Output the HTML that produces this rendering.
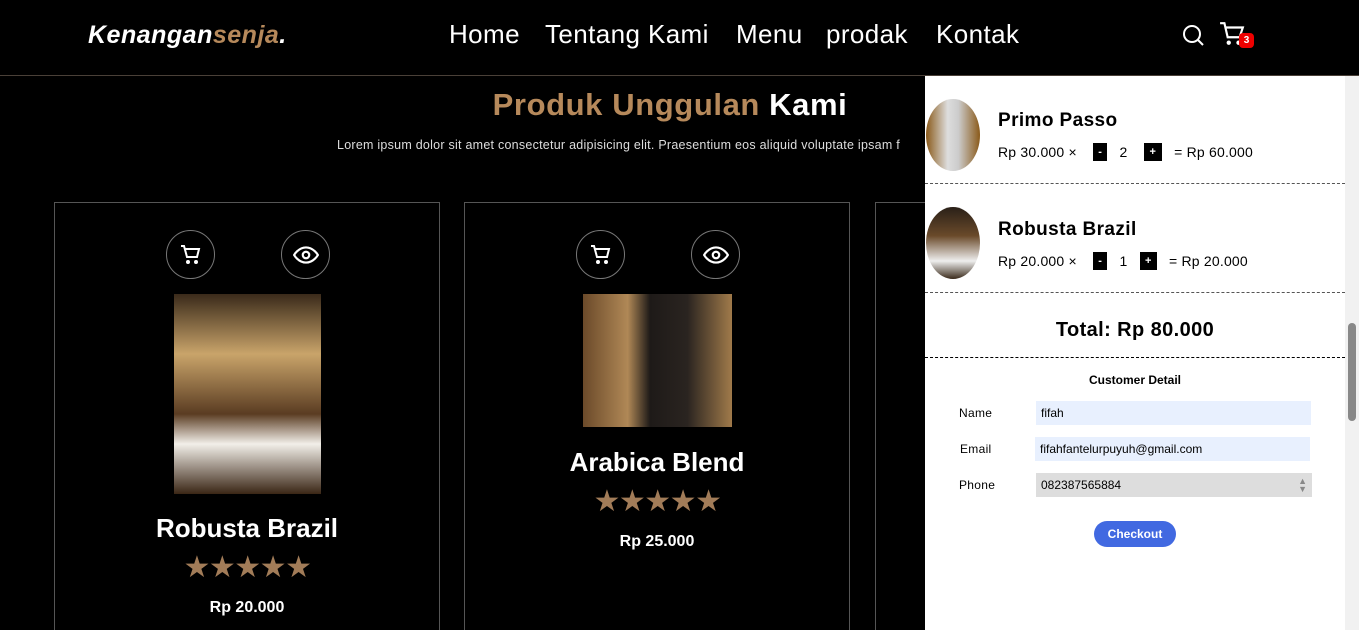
<!DOCTYPE html>
<html><head><meta charset="utf-8"><style>
*{margin:0;padding:0;box-sizing:border-box}
html,body{width:1359px;height:630px;overflow:hidden}
body{background:#000;font-family:"Liberation Sans",sans-serif;color:#fff;position:relative}
.hdr{position:absolute;left:0;top:0;width:1359px;height:76px;border-bottom:1px solid #4a4038}
.logo{position:absolute;left:88px;top:21px;font-size:25px;font-weight:bold;font-style:italic;letter-spacing:0.5px}
.logo span{color:#b6895b}
.nav{position:absolute;top:19px;font-size:26px;letter-spacing:0.4px}
.ttl{position:absolute;top:87px;left:0;width:1340px;text-align:center;font-size:31px;font-weight:bold;letter-spacing:0.6px}
.ttl span{color:#b6895b}
.sub{position:absolute;top:138px;left:337px;font-size:12.5px;color:#ddd;white-space:nowrap;letter-spacing:0.25px}
.card{position:absolute;top:202px;width:386px;height:440px;border:1px solid #555}
.ic{position:absolute;top:27px;width:49px;height:49px;border:1px solid #777;border-radius:50%;display:flex;align-items:center;justify-content:center}
.img{position:absolute}
.pn{position:absolute;width:100%;text-align:center;font-size:26px;font-weight:bold;letter-spacing:0}
.st{position:absolute;width:100%;text-align:center;color:#a27c58;font-size:30px;letter-spacing:-1.5px}
.pr{position:absolute;width:100%;text-align:center;font-size:16px;font-weight:bold}
.side{position:absolute;left:925px;top:76px;width:420px;height:554px;background:#fff;color:#000}
.sb{position:absolute;left:1345px;top:76px;width:14px;height:554px;background:#f1f1f1}
.sb div{position:absolute;left:3px;top:247px;width:8px;height:98px;background:#888;border-radius:4px}
.item{position:absolute;left:0;width:420px;border-bottom:1px dashed #555}
.av{position:absolute;left:1px;width:54px;border-radius:50%}
.nm{position:absolute;left:73px;font-size:19px;font-weight:bold;letter-spacing:0.4px}
.ln{position:absolute;left:73px;font-size:14px;display:flex;align-items:center;white-space:nowrap;letter-spacing:0.2px}
.bt{display:inline-block;width:14px;height:18px;background:#000;color:#fff;font-size:11px;text-align:center;line-height:18px;font-weight:bold}
.lbl{position:absolute;font-size:12px;letter-spacing:0.3px}
.inp{position:absolute;left:111px;width:275px;height:24px;background:#e8f0fe;font-size:12px;padding:3px 5px;line-height:18px}
</style></head><body>
<div class="hdr">
<div class="logo">Kenangan<span>senja</span>.</div>
<div class="nav" style="left:449px">Home</div>
<div class="nav" style="left:545px">Tentang Kami</div>
<div class="nav" style="left:736px">Menu</div>
<div class="nav" style="left:826px">prodak</div>
<div class="nav" style="left:936px">Kontak</div>
<svg style="position:absolute;left:1181px;top:23px" width="24" height="24" viewBox="0 0 24 24" fill="none" stroke="#fff" stroke-width="2"><circle cx="11" cy="11" r="8"/><path d="M17 17l5 5"/></svg>
<svg style="position:absolute;left:1219px;top:21px" width="26" height="26" viewBox="0 0 24 24" fill="none" stroke="#fff" stroke-width="2"><path d="M1 2h4l3 13h11l3-9H6"/><circle cx="9" cy="20" r="1" fill="#fff"/><circle cx="18" cy="20" r="1" fill="#fff"/></svg>
<div style="position:absolute;left:1239px;top:33px;width:15px;height:15px;background:#e00;border-radius:4px;font-size:10px;font-weight:bold;text-align:center;line-height:15px">3</div>
</div>
<div class="ttl"><span>Produk Unggulan</span> Kami</div>
<div class="sub">Lorem ipsum dolor sit amet consectetur adipisicing elit. Praesentium eos aliquid voluptate ipsam f</div>

<div class="card" style="left:54px">
<div class="ic" style="left:111px"><svg width="24" height="24" viewBox="0 0 24 24" fill="none" stroke="#fff" stroke-width="2"><path d="M2 3h3l3 11h10l2-8H6"/><circle cx="9" cy="19" r="1" fill="#fff"/><circle cx="17" cy="19" r="1" fill="#fff"/></svg></div>
<div class="ic" style="left:226px"><svg width="26" height="26" viewBox="0 0 24 24" fill="none" stroke="#fff" stroke-width="2"><path d="M1 12s4-7 11-7 11 7 11 7-4 7-11 7S1 12 1 12z"/><circle cx="12" cy="12" r="3"/></svg></div>
<div class="img" style="left:119px;top:91px;width:147px;height:200px;background:linear-gradient(180deg,#3a2a1a 0%,#c9a46a 30%,#5a3c22 60%,#f2efe9 75%,#3a2615 100%)"></div>
<div class="pn" style="top:310px">Robusta Brazil</div>
<div class="st" style="top:347px">★★★★★</div>
<div class="pr" style="top:396px">Rp 20.000</div>
</div>
<div class="card" style="left:464px">
<div class="ic" style="left:111px"><svg width="24" height="24" viewBox="0 0 24 24" fill="none" stroke="#fff" stroke-width="2"><path d="M2 3h3l3 11h10l2-8H6"/><circle cx="9" cy="19" r="1" fill="#fff"/><circle cx="17" cy="19" r="1" fill="#fff"/></svg></div>
<div class="ic" style="left:226px"><svg width="26" height="26" viewBox="0 0 24 24" fill="none" stroke="#fff" stroke-width="2"><path d="M1 12s4-7 11-7 11 7 11 7-4 7-11 7S1 12 1 12z"/><circle cx="12" cy="12" r="3"/></svg></div>
<div class="img" style="left:118px;top:91px;width:149px;height:133px;background:linear-gradient(90deg,#6b4a2a,#b08856 30%,#1e1a18 45%,#2a2420 70%,#a07a4a 100%)"></div>
<div class="pn" style="top:244px">Arabica Blend</div>
<div class="st" style="top:281px">★★★★★</div>
<div class="pr" style="top:330px">Rp 25.000</div>
</div>
<div class="card" style="left:875px"></div>

<div class="side">
<div class="item" style="top:0;height:108px">
<div class="av" style="top:23px;height:72px;background:linear-gradient(90deg,#8a5a1a,#ddd 40%,#ccc 60%,#8a5a1a)"></div>
<div class="nm" style="top:34px">Primo Passo</div>
<div class="ln" style="top:67px">Rp 30.000 ×&nbsp;&nbsp;&nbsp;&nbsp;<span class="bt">-</span>&nbsp;&nbsp;&nbsp;2&nbsp;&nbsp;&nbsp;&nbsp;<span class="bt" style="width:18px">+</span>&nbsp;&nbsp;&nbsp;= Rp 60.000</div>
</div>
<div class="item" style="top:108px;height:109px">
<div class="av" style="top:23px;height:72px;background:linear-gradient(180deg,#2a2018,#6a4a2a 40%,#eee 75%,#3a2a1a)"></div>
<div class="nm" style="top:35px">Robusta Brazil</div>
<div class="ln" style="top:68px">Rp 20.000 ×&nbsp;&nbsp;&nbsp;&nbsp;<span class="bt">-</span>&nbsp;&nbsp;&nbsp;1&nbsp;&nbsp;&nbsp;<span class="bt" style="width:17px">+</span>&nbsp;&nbsp;&nbsp;= Rp 20.000</div>
</div>
<div style="position:absolute;top:243px;width:420px;text-align:center;font-size:20px;font-weight:bold;letter-spacing:0.4px">Total: Rp 80.000</div>
<div style="position:absolute;top:281px;width:420px;border-top:1px dashed #000"></div>
<div style="position:absolute;top:297px;width:420px;text-align:center;font-size:12px;font-weight:bold">Customer Detail</div>
<div class="lbl" style="left:34px;top:330px">Name</div>
<div class="inp" style="top:325px">fifah</div>
<div class="lbl" style="left:35px;top:366px">Email</div>
<div class="inp" style="top:361px;left:110px">fifahfantelurpuyuh@gmail.com</div>
<div class="lbl" style="left:34px;top:402px">Phone</div>
<div class="inp" style="top:397px;background:#ddd;width:276px">082387565884<span style="position:absolute;right:5px;top:4px;color:#888;font-size:9px;line-height:8px">▲<br>▼</span></div>
<div style="position:absolute;left:169px;top:445px;width:82px;height:26px;background:#4169e1;border-radius:13px;color:#fff;font-size:12px;font-weight:bold;text-align:center;line-height:26px">Checkout</div>
</div>
<div class="sb"><div></div></div>
</body></html>
